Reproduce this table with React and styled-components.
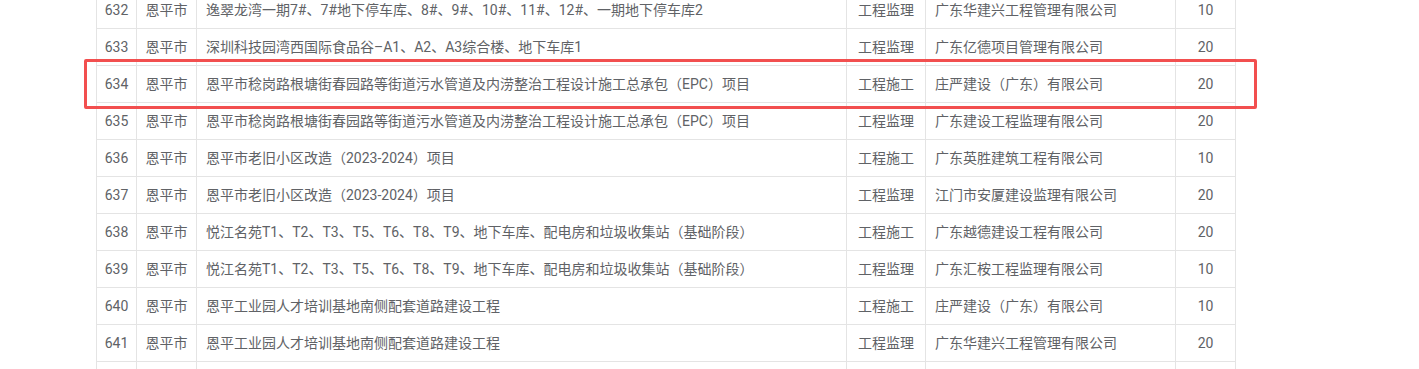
import styled, { createGlobalStyle } from "styled-components";

const GlobalStyle = createGlobalStyle`
  html, body {
    margin: 0;
    padding: 0;
    background: #fff;
    overflow: hidden;
  }
`;

const Page = styled.div`
  padding-left: 96px;
  height: 369px;
  overflow: hidden;
`;

const TableWrap = styled.div`
  position: relative;
  width: 1139px;
  margin-top: -8.8px;
`;

const Table = styled.table`
  width: 1139px;
  table-layout: fixed;
  border-collapse: collapse;
  font-family: Roboto, "Noto Sans CJK SC", sans-serif;
  font-size: 14px;
  color: #606266;
`;

const Col = styled.col`
  width: ${(props) => props.w}px;
`;

const Cell = styled.td`
  height: 37px;
  box-sizing: border-box;
  padding: ${(props) => (props.center ? "0 2px" : "0 9px")};
  border: 1px solid #e4e4e4;
  text-align: ${(props) => (props.center ? "center" : "left")};
  white-space: nowrap;
  overflow: hidden;
  line-height: 20px;
`;

const Highlight = styled.div`
  position: absolute;
  left: -12px;
  top: 67.8px;
  width: 1173px;
  height: 50px;
  box-sizing: border-box;
  border: 3px solid #f24f4f;
  border-radius: 2px;
  pointer-events: none;
`;

const widths = [40, 60, 650, 79, 250, 60];
const centered = [true, true, false, true, false, true];

const rows = [
  ["632", "恩平市", "逸翠龙湾一期7#、7#地下停车库、8#、9#、10#、11#、12#、一期地下停车库2", "工程监理", "广东华建兴工程管理有限公司", "10"],
  ["633", "恩平市", "深圳科技园湾西国际食品谷–A1、A2、A3综合楼、地下车库1", "工程监理", "广东亿德项目管理有限公司", "20"],
  ["634", "恩平市", "恩平市稔岗路根塘街春园路等街道污水管道及内涝整治工程设计施工总承包（EPC）项目", "工程施工", "庄严建设（广东）有限公司", "20"],
  ["635", "恩平市", "恩平市稔岗路根塘街春园路等街道污水管道及内涝整治工程设计施工总承包（EPC）项目", "工程监理", "广东建设工程监理有限公司", "20"],
  ["636", "恩平市", "恩平市老旧小区改造（2023-2024）项目", "工程施工", "广东英胜建筑工程有限公司", "10"],
  ["637", "恩平市", "恩平市老旧小区改造（2023-2024）项目", "工程监理", "江门市安厦建设监理有限公司", "20"],
  ["638", "恩平市", "悦江名苑T1、T2、T3、T5、T6、T8、T9、地下车库、配电房和垃圾收集站（基础阶段）", "工程施工", "广东越德建设工程有限公司", "20"],
  ["639", "恩平市", "悦江名苑T1、T2、T3、T5、T6、T8、T9、地下车库、配电房和垃圾收集站（基础阶段）", "工程监理", "广东汇桉工程监理有限公司", "10"],
  ["640", "恩平市", "恩平工业园人才培训基地南侧配套道路建设工程", "工程施工", "庄严建设（广东）有限公司", "10"],
  ["641", "恩平市", "恩平工业园人才培训基地南侧配套道路建设工程", "工程监理", "广东华建兴工程管理有限公司", "20"],
  ["", "", "", "", "", ""],
];

const App = () => {
  return (
    <Page>
      <GlobalStyle />
      <TableWrap>
        <Table>
          <colgroup>
            {widths.map((w, i) => (
              <Col key={i} w={w} />
            ))}
          </colgroup>
          <tbody>
            {rows.map((r, i) => (
              <tr key={i}>
                {r.map((text, j) => (
                  <Cell key={j} center={centered[j]}>
                    {text}
                  </Cell>
                ))}
              </tr>
            ))}
          </tbody>
        </Table>
        <Highlight />
      </TableWrap>
    </Page>
  );
};

export default App;
